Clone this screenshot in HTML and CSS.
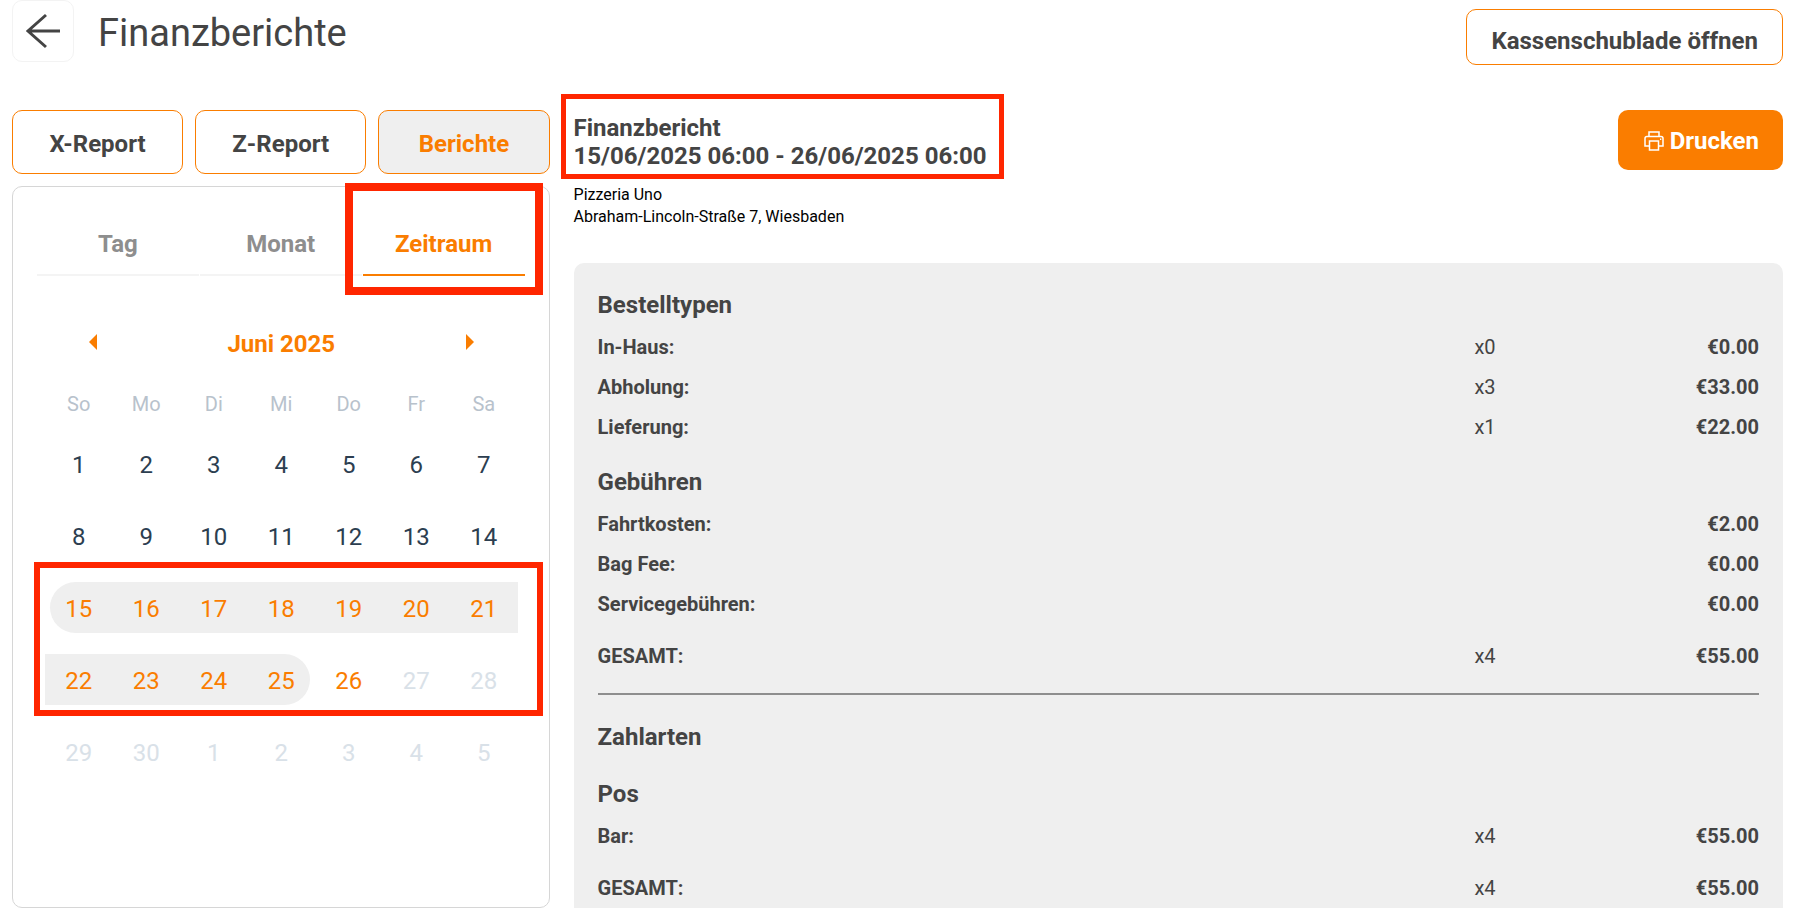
FILE: index.html
```html
<!DOCTYPE html>
<html lang="de">
<head>
    <meta charset="UTF-8">
    <meta name="viewport" content="width=device-width, initial-scale=1.0">
    <title>Finanzberichte</title>
    <link rel="stylesheet" href="styles.css">
</head>
<body>

    <header class="topbar">
        <button class="back" aria-label="Zurück">
            <svg width="36" height="36" viewBox="0 0 36 36" fill="none" stroke="#444" stroke-width="3">
                <path d="M35 18H3M21 2L3 18L21 34"/>
            </svg>
        </button>
        <h1>Finanzberichte</h1>
        <button class="btn drawer-btn">Kassenschublade öffnen</button>
    </header>

    <main>
        <div class="sidebar">
            <div class="report-types">
                <button class="btn">X-Report</button>
                <button class="btn">Z-Report</button>
                <button class="btn active">Berichte</button>
            </div>

            <div class="picker">
                <div class="tabs">
                    <button class="tab">Tag</button>
                    <button class="tab">Monat</button>
                    <button class="tab active">Zeitraum</button>
                    <div class="mark mark-tab"></div>
                </div>

                <div class="calendar">
                    <div class="month">
                        <button aria-label="Voriger Monat"><svg width="8" height="16" viewBox="0 0 8 16"><path d="M8 0V16L0 8Z" fill="#fa7d00"/></svg></button>
                        <span>Juni 2025</span>
                        <button aria-label="Nächster Monat"><svg width="8" height="16" viewBox="0 0 8 16"><path d="M0 0V16L8 8Z" fill="#fa7d00"/></svg></button>
                    </div>
                    <table class="days">
                        <thead>
                            <tr><th>So</th><th>Mo</th><th>Di</th><th>Mi</th><th>Do</th><th>Fr</th><th>Sa</th></tr>
                        </thead>
                        <tbody>
                            <tr><td>1</td><td>2</td><td>3</td><td>4</td><td>5</td><td>6</td><td>7</td></tr>
                            <tr><td>8</td><td>9</td><td>10</td><td>11</td><td>12</td><td>13</td><td>14</td></tr>
                            <tr class="range">
                                <td class="start"><span>15</span></td><td><span>16</span></td><td><span>17</span></td><td><span>18</span></td><td><span>19</span></td><td><span>20</span></td><td><span>21</span></td>
                            </tr>
                            <tr class="range">
                                <td><span>22</span></td><td><span>23</span></td><td><span>24</span></td><td class="end"><span>25</span></td><td class="today">26</td><td class="off">27</td><td class="off">28</td>
                            </tr>
                            <tr class="off"><td>29</td><td>30</td><td>1</td><td>2</td><td>3</td><td>4</td><td>5</td></tr>
                        </tbody>
                    </table>
                    <div class="mark mark-range"></div>
                </div>
            </div>
        </div>

        <div class="report">
            <div class="report-head">
                <div>
                    <div class="report-period">
                        <h2>Finanzbericht</h2>
                        <h2>15/06/2025 06:00 - 26/06/2025 06:00</h2>
                        <div class="mark mark-period"></div>
                    </div>
                    <p>Pizzeria Uno</p>
                    <p>Abraham-Lincoln-Straße 7, Wiesbaden</p>
                </div>
                <button class="print">
                    <svg width="20" height="20" viewBox="0 0 20 20" fill="none" stroke="#fff" stroke-width="1.5">
                        <path d="M5 5.5V1H15V5.5M5 15H1V7.5Q1 5.5 3 5.5H17Q19 5.5 19 7.5V15H15M5.5 10H14.5V19H5.5ZM16 8.2H17.3"/>
                    </svg>
                    Drucken
                </button>
            </div>

            <div class="report-body">
                <h3>Bestelltypen</h3>
                <table class="lines">
                    <tr><th>In-Haus:</th><td>x0</td><td>€0.00</td></tr>
                    <tr><th>Abholung:</th><td>x3</td><td>€33.00</td></tr>
                    <tr><th>Lieferung:</th><td>x1</td><td>€22.00</td></tr>
                </table>

                <h3>Gebühren</h3>
                <table class="lines">
                    <tr><th>Fahrtkosten:</th><td></td><td>€2.00</td></tr>
                    <tr><th>Bag Fee:</th><td></td><td>€0.00</td></tr>
                    <tr><th>Servicegebühren:</th><td></td><td>€0.00</td></tr>
                </table>
                <table class="lines total">
                    <tr><th>GESAMT:</th><td>x4</td><td>€55.00</td></tr>
                </table>

                <hr>

                <h3>Zahlarten</h3>
                <h3>Pos</h3>
                <table class="lines">
                    <tr><th>Bar:</th><td>x4</td><td>€55.00</td></tr>
                </table>
                <table class="lines total">
                    <tr><th>GESAMT:</th><td>x4</td><td>€55.00</td></tr>
                </table>
            </div>
        </div>
    </main>

</body>
</html>
```
FILE: styles.css
```css
* {
    box-sizing: border-box;
}
body {
    display: flex;
    flex-direction: column;
    height: 100vh;
    margin: 0;
    padding: 0 13px 9px 12px;
    overflow: hidden;
    font-family: Roboto, sans-serif;
    color: #444;
    background-color: #fff;
}
h1, h2, h3, p {
    margin: 0;
}
button {
    padding: 0;
    border: none;
    background: none;
    font-family: inherit;
    color: inherit;
    cursor: pointer;
}
table {
    width: 100%;
    table-layout: fixed;
    border-collapse: collapse;
}
th, td {
    padding: 0;
}

/* header */
.topbar {
    display: flex;
    align-items: flex-start;
    margin-bottom: 44px;
}
.back {
    display: flex;
    align-items: center;
    justify-content: center;
    width: 62px;
    height: 62px;
    border: 1px solid #f3f3f3;
    border-radius: 10px;
}
h1 {
    flex: 1;
    margin-left: 24px;
    font-size: 38px;
    font-weight: 400;
    line-height: 66px;
}
.btn {
    height: 64px;
    padding-top: 4px;
    border: 1px solid #fa7d00;
    border-radius: 10px;
    font-size: 24px;
    font-weight: 700;
}
.btn.active {
    background-color: #efefef;
    color: #fa7d00;
}
.drawer-btn {
    height: 56px;
    margin-top: 9px;
    padding: 8px 24px 0;
}

main {
    display: grid;
    grid-template-columns: 4fr 9fr;
    gap: 24px;
    flex: 1;
    min-height: 0;
}

/* left side */
.sidebar {
    display: flex;
    flex-direction: column;
    gap: 12px;
}
.report-types {
    display: grid;
    grid-template-columns: repeat(3, 1fr);
    gap: 12px;
}
.picker {
    flex: 1;
    padding: 24px;
    border: 1px solid #d6d6d6;
    border-radius: 10px;
}
.tabs {
    position: relative;
    display: grid;
    grid-template-columns: repeat(3, 1fr);
    gap: 1px;
}
.tab {
    height: 65px;
    padding-top: 2px;
    border-bottom: 2px solid #f4f4f4;
    font-size: 24px;
    font-weight: 700;
    color: #8e8e8e;
}
.tab.active {
    border-color: #fa7d00;
    color: #fa7d00;
}
.calendar {
    position: relative;
    padding: 52px 7px 0 8px;
}
.month {
    display: flex;
    align-items: center;
    justify-content: space-between;
    height: 32px;
    padding: 0 44px;
    font-size: 24px;
    font-weight: 700;
    color: #fa7d00;
}
.month svg {
    display: block;
    margin-bottom: 4px;
}
.days {
    margin-top: 20px;
    text-align: center;
}
.days th {
    height: 47px;
    font-size: 20px;
    font-weight: 400;
    color: #b8c2cc;
}
.days td {
    height: 72px;
    padding-top: 3px;
    font-size: 24px;
    color: #2c3e50;
}
.days td:has(span) {
    padding-top: 0;
}
.days .range td {
    color: #fa7d00;
}
.range span {
    display: block;
    padding-top: 3px;
    line-height: 48px;
    background-color: #efefef;
}
.start span {
    margin-left: 5px;
    padding-right: 5px;
    border-radius: 26px 0 0 26px;
}
.end span {
    margin-right: 5px;
    padding-left: 5px;
    border-radius: 0 26px 26px 0;
}
.days .off td, .days .range .off {
    color: #d9e1e8;
}

/* red highlight frames */
.mark {
    position: absolute;
    border: 6px solid #ff2600;
    pointer-events: none;
}
.mark-tab {
    top: -28px;
    right: -18px;
    bottom: -19px;
    width: 198px;
    border-width: 8px;
}
.mark-range {
    top: 286px;
    left: -3px;
    right: -18px;
    height: 154px;
}
.mark-period {
    top: -20px;
    right: -18px;
    bottom: -9px;
    left: -13px;
    border-width: 5px;
}

/* report */
.report {
    display: flex;
    flex-direction: column;
    min-height: 0;
}
.report-head {
    display: flex;
    align-items: flex-start;
    justify-content: space-between;
    padding-bottom: 35px;
}
.report-period {
    position: relative;
    margin: 4px 0 14px;
}
h2, h3 {
    font-size: 24px;
    font-weight: 700;
    line-height: 28px;
}
.report-head p {
    font-size: 16px;
    line-height: 22px;
    color: #000;
}
.print {
    display: flex;
    align-items: center;
    gap: 6px;
    height: 60px;
    padding: 2px 24px 0 26px;
    border-radius: 10px;
    background-color: #fa7d00;
    font-size: 24px;
    font-weight: 700;
    color: #fff;
}
.report-body {
    flex: 1;
    min-height: 0;
    padding: 28px 24px 0;
    overflow: hidden;
    border-radius: 10px 10px 0 0;
    background-color: #efefef;
}
h3 {
    margin-bottom: 8px;
}
.lines + h3 {
    margin-top: 21px;
}
h3 + h3 {
    margin-top: 29px;
}
.lines {
    font-size: 20px;
}
.lines th {
    width: 75.5%;
    height: 40px;
    font-weight: 700;
    text-align: left;
}
.lines td:last-child {
    font-weight: 700;
    text-align: right;
}
.total {
    margin-top: 12px;
}
hr {
    height: 2px;
    margin: 17px 0 28px;
    border: none;
    background-color: #8e8e8e;
}
```
